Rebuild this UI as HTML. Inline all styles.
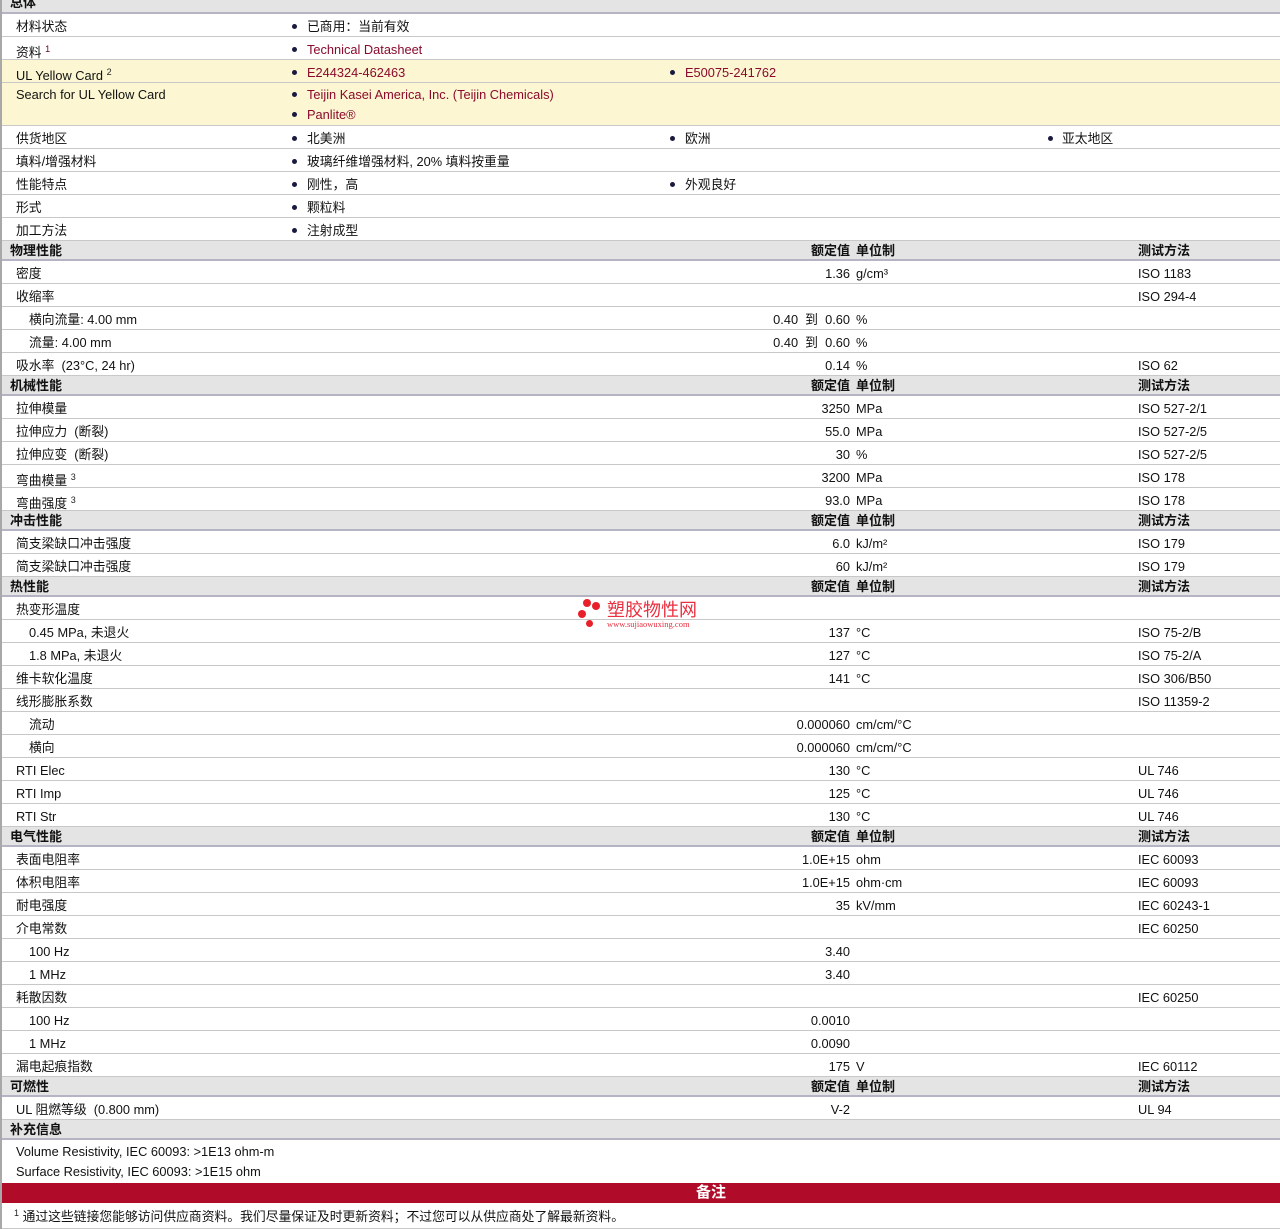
<!DOCTYPE html>
<html><head><meta charset="utf-8"><style>
body{margin:0;width:1280px;height:1229px;position:relative;background:#fff;font-family:"Liberation Sans","Noto Sans CJK SC",sans-serif;font-size:12.8px;color:#111;overflow:hidden}
.r{position:absolute;left:2px;right:0;border-bottom:1px solid #c8c8c8;box-sizing:border-box}
.r span{position:absolute;white-space:nowrap;top:1px}
.h{background:#e4e4e4;border-bottom:2px solid #b4b4c4;font-weight:bold;font-size:13px}
.h span{top:0}
.y{background:#fcf7d2}
.l{left:14px}.l2{left:27px}.hb{left:8px}
.v{right:430px}.u{left:854px}.m{left:1136px}
.b1,.b2,.b3{width:5px;height:5px;border-radius:50%;background:#1a1a40;margin-top:9px;line-height:0}
.b1{left:290px}.t1{left:305px}.b2{left:668px}.t2{left:683px}.b3{left:1046px}.t3{left:1060px}
.a{color:#8a0a2c}
sup{font-size:9px;vertical-align:5px;color:#222}
#lb{position:absolute;left:0;top:0;width:2px;height:1229px;background:#a8a8a8}
</style></head><body>
<div id="lb"></div>
<div class="r h" style="top:-8px;height:22px;line-height:22px"><span class="hb">总体</span></div>
<div class="r" style="top:14px;height:23px;line-height:23px"><span class="l">材料状态</span><span class="b1"></span><span class="t1">已商用：当前有效</span></div>
<div class="r" style="top:37px;height:23px;line-height:23px"><span class="l">资料 <sup style="color:#603">1</sup></span><span class="b1"></span><span class="t1 a">Technical Datasheet</span></div>
<div class="r y" style="top:60px;height:23px;line-height:23px"><span class="l">UL Yellow Card <sup>2</sup></span><span class="b1"></span><span class="t1 a">E244324-462463</span><span class="b2"></span><span class="t2 a">E50075-241762</span></div>
<div class="r y" style="top:83px;height:43px;line-height:20px"><span class="l" style="top:2px">Search for UL Yellow Card</span><span class="b1" style="top:0px"></span><span class="t1 a" style="top:2px">Teijin Kasei America, Inc. (Teijin Chemicals)</span><span class="b1" style="top:20px"></span><span class="t1 a" style="top:22px">Panlite®</span></div>
<div class="r" style="top:126px;height:23px;line-height:23px"><span class="l">供货地区</span><span class="b1"></span><span class="t1">北美洲</span><span class="b2"></span><span class="t2">欧洲</span><span class="b3"></span><span class="t3">亚太地区</span></div>
<div class="r" style="top:149px;height:23px;line-height:23px"><span class="l">填料/增强材料</span><span class="b1"></span><span class="t1">玻璃纤维增强材料, 20% 填料按重量</span></div>
<div class="r" style="top:172px;height:23px;line-height:23px"><span class="l">性能特点</span><span class="b1"></span><span class="t1">刚性，高</span><span class="b2"></span><span class="t2">外观良好</span></div>
<div class="r" style="top:195px;height:23px;line-height:23px"><span class="l">形式</span><span class="b1"></span><span class="t1">颗粒料</span></div>
<div class="r" style="top:218px;height:23px;line-height:23px"><span class="l">加工方法</span><span class="b1"></span><span class="t1">注射成型</span></div>

<div class="r h" style="top:241px;height:20px;line-height:19px"><span class="hb">物理性能</span><span class="v">额定值</span><span class="u">单位制</span><span class="m">测试方法</span></div>
<div class="r" style="top:261px;height:23px;line-height:23px"><span class="l">密度</span><span class="v">1.36</span><span class="u">g/cm³</span><span class="m">ISO 1183</span></div>
<div class="r" style="top:284px;height:23px;line-height:23px"><span class="l">收缩率</span><span class="m">ISO 294-4</span></div>
<div class="r" style="top:307px;height:23px;line-height:23px"><span class="l2">横向流量: 4.00 mm</span><span class="v">0.40&nbsp; 到&nbsp; 0.60</span><span class="u">%</span></div>
<div class="r" style="top:330px;height:23px;line-height:23px"><span class="l2">流量: 4.00 mm</span><span class="v">0.40&nbsp; 到&nbsp; 0.60</span><span class="u">%</span></div>
<div class="r" style="top:353px;height:23px;line-height:23px"><span class="l">吸水率&nbsp; (23°C, 24 hr)</span><span class="v">0.14</span><span class="u">%</span><span class="m">ISO 62</span></div>

<div class="r h" style="top:376px;height:20px;line-height:19px"><span class="hb">机械性能</span><span class="v">额定值</span><span class="u">单位制</span><span class="m">测试方法</span></div>
<div class="r" style="top:396px;height:23px;line-height:23px"><span class="l">拉伸模量</span><span class="v">3250</span><span class="u">MPa</span><span class="m">ISO 527-2/1</span></div>
<div class="r" style="top:419px;height:23px;line-height:23px"><span class="l">拉伸应力&nbsp; (断裂)</span><span class="v">55.0</span><span class="u">MPa</span><span class="m">ISO 527-2/5</span></div>
<div class="r" style="top:442px;height:23px;line-height:23px"><span class="l">拉伸应变&nbsp; (断裂)</span><span class="v">30</span><span class="u">%</span><span class="m">ISO 527-2/5</span></div>
<div class="r" style="top:465px;height:23px;line-height:23px"><span class="l">弯曲模量 <sup>3</sup></span><span class="v">3200</span><span class="u">MPa</span><span class="m">ISO 178</span></div>
<div class="r" style="top:488px;height:23px;line-height:23px"><span class="l">弯曲强度 <sup>3</sup></span><span class="v">93.0</span><span class="u">MPa</span><span class="m">ISO 178</span></div>

<div class="r h" style="top:511px;height:20px;line-height:19px"><span class="hb">冲击性能</span><span class="v">额定值</span><span class="u">单位制</span><span class="m">测试方法</span></div>
<div class="r" style="top:531px;height:23px;line-height:23px"><span class="l">简支梁缺口冲击强度</span><span class="v">6.0</span><span class="u">kJ/m²</span><span class="m">ISO 179</span></div>
<div class="r" style="top:554px;height:23px;line-height:23px"><span class="l">简支梁缺口冲击强度</span><span class="v">60</span><span class="u">kJ/m²</span><span class="m">ISO 179</span></div>

<div class="r h" style="top:577px;height:20px;line-height:19px"><span class="hb">热性能</span><span class="v">额定值</span><span class="u">单位制</span><span class="m">测试方法</span></div>
<div class="r" style="top:597px;height:23px;line-height:23px"><span class="l">热变形温度</span></div>
<div class="r" style="top:620px;height:23px;line-height:23px"><span class="l2">0.45 MPa, 未退火</span><span class="v">137</span><span class="u">°C</span><span class="m">ISO 75-2/B</span></div>
<div class="r" style="top:643px;height:23px;line-height:23px"><span class="l2">1.8 MPa, 未退火</span><span class="v">127</span><span class="u">°C</span><span class="m">ISO 75-2/A</span></div>
<div class="r" style="top:666px;height:23px;line-height:23px"><span class="l">维卡软化温度</span><span class="v">141</span><span class="u">°C</span><span class="m">ISO 306/B50</span></div>
<div class="r" style="top:689px;height:23px;line-height:23px"><span class="l">线形膨胀系数</span><span class="m">ISO 11359-2</span></div>
<div class="r" style="top:712px;height:23px;line-height:23px"><span class="l2">流动</span><span class="v">0.000060</span><span class="u">cm/cm/°C</span></div>
<div class="r" style="top:735px;height:23px;line-height:23px"><span class="l2">横向</span><span class="v">0.000060</span><span class="u">cm/cm/°C</span></div>
<div class="r" style="top:758px;height:23px;line-height:23px"><span class="l">RTI Elec</span><span class="v">130</span><span class="u">°C</span><span class="m">UL 746</span></div>
<div class="r" style="top:781px;height:23px;line-height:23px"><span class="l">RTI Imp</span><span class="v">125</span><span class="u">°C</span><span class="m">UL 746</span></div>
<div class="r" style="top:804px;height:23px;line-height:23px"><span class="l">RTI Str</span><span class="v">130</span><span class="u">°C</span><span class="m">UL 746</span></div>

<div class="r h" style="top:827px;height:20px;line-height:19px"><span class="hb">电气性能</span><span class="v">额定值</span><span class="u">单位制</span><span class="m">测试方法</span></div>
<div class="r" style="top:847px;height:23px;line-height:23px"><span class="l">表面电阻率</span><span class="v">1.0E+15</span><span class="u">ohm</span><span class="m">IEC 60093</span></div>
<div class="r" style="top:870px;height:23px;line-height:23px"><span class="l">体积电阻率</span><span class="v">1.0E+15</span><span class="u">ohm·cm</span><span class="m">IEC 60093</span></div>
<div class="r" style="top:893px;height:23px;line-height:23px"><span class="l">耐电强度</span><span class="v">35</span><span class="u">kV/mm</span><span class="m">IEC 60243-1</span></div>
<div class="r" style="top:916px;height:23px;line-height:23px"><span class="l">介电常数</span><span class="m">IEC 60250</span></div>
<div class="r" style="top:939px;height:23px;line-height:23px"><span class="l2">100 Hz</span><span class="v">3.40</span></div>
<div class="r" style="top:962px;height:23px;line-height:23px"><span class="l2">1 MHz</span><span class="v">3.40</span></div>
<div class="r" style="top:985px;height:23px;line-height:23px"><span class="l">耗散因数</span><span class="m">IEC 60250</span></div>
<div class="r" style="top:1008px;height:23px;line-height:23px"><span class="l2">100 Hz</span><span class="v">0.0010</span></div>
<div class="r" style="top:1031px;height:23px;line-height:23px"><span class="l2">1 MHz</span><span class="v">0.0090</span></div>
<div class="r" style="top:1054px;height:23px;line-height:23px"><span class="l">漏电起痕指数</span><span class="v">175</span><span class="u">V</span><span class="m">IEC 60112</span></div>

<div class="r h" style="top:1077px;height:20px;line-height:19px"><span class="hb">可燃性</span><span class="v">额定值</span><span class="u">单位制</span><span class="m">测试方法</span></div>
<div class="r" style="top:1097px;height:23px;line-height:23px"><span class="l">UL 阻燃等级&nbsp; (0.800 mm)</span><span class="v">V-2</span><span class="m">UL 94</span></div>

<div class="r h" style="top:1120px;height:20px;line-height:19px"><span class="hb">补充信息</span></div>
<div style="position:absolute;left:16px;top:1142px;line-height:20px">Volume Resistivity, IEC 60093: &gt;1E13 ohm-m<br>Surface Resistivity, IEC 60093: &gt;1E15 ohm</div>
<div style="position:absolute;left:2px;right:0;top:1183px;height:20px;background:#b00c2a;color:#fff;font-weight:bold;font-size:15px;line-height:19px;padding-left:140px;box-sizing:border-box;text-align:center">备注</div>
<div class="r" style="top:1203px;height:26px;line-height:24px"><span class="l" style="left:12px;top:-2px"><sup>1</sup> 通过这些链接您能够访问供应商资料。我们尽量保证及时更新资料；不过您可以从供应商处了解最新资料。</span></div>

<div style="position:absolute;left:577px;top:598px;width:130px;height:34px">
<div style="position:absolute;left:6px;top:1px;width:8px;height:8px;border-radius:50%;background:#e8202a"></div>
<div style="position:absolute;left:15px;top:4px;width:8px;height:8px;border-radius:50%;background:#e8202a"></div>
<div style="position:absolute;left:1px;top:12px;width:8px;height:8px;border-radius:50%;background:#e8202a"></div>
<div style="position:absolute;left:9px;top:22px;width:7px;height:7px;border-radius:50%;background:#e8202a"></div>
<div style="position:absolute;left:30px;top:3px;font-size:18px;line-height:19px;color:#e83040">塑胶物性网</div>
<div style="position:absolute;left:30px;top:22px;font-size:8.5px;line-height:9px;color:#e83040;font-family:'Liberation Serif',serif">www.sujiaowuxing.com</div>
</div>
</body></html>
